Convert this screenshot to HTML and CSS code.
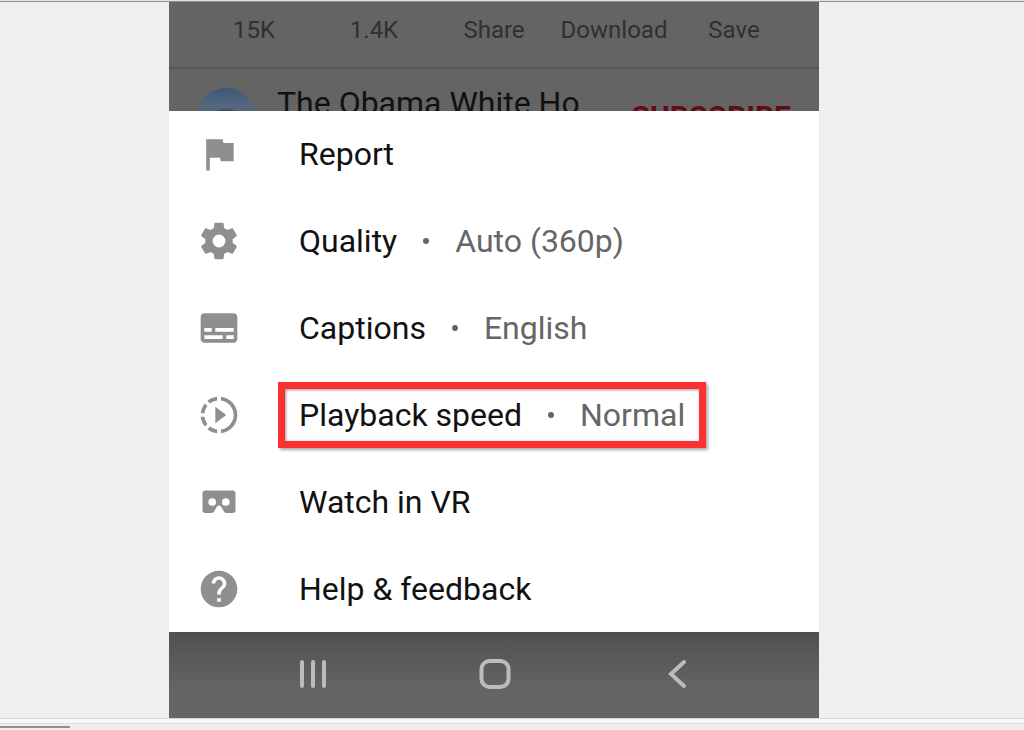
FILE: index.html
```html
<!DOCTYPE html>
<html lang="en">
<head>
    <meta charset="UTF-8">
    <meta name="viewport" content="width=device-width, initial-scale=1.0">
    <title>Playback options</title>
    <link rel="stylesheet" href="styles.css">
</head>
<body>
    <main class="stage">
        <div class="phone">
            <div class="actions">
                <button type="button">15K</button>
                <button type="button">1.4K</button>
                <button type="button">Share</button>
                <button type="button">Download</button>
                <button type="button">Save</button>
            </div>

            <div class="channel">
                <svg class="avatar" viewBox="0 0 58 58" aria-hidden="true">
                    <defs>
                        <linearGradient id="sky" x1="0" y1="0" x2="0" y2="1">
                            <stop offset="0" stop-color="#3d5678"/>
                            <stop offset="0.3" stop-color="#536880"/>
                            <stop offset="0.5" stop-color="#5c6468"/>
                        </linearGradient>
                    </defs>
                    <circle cx="29" cy="29" r="29" fill="url(#sky)"/>
                    <path d="M19 23q10-5 20 0z" fill="#47505a"/>
                    <path d="M14 7l4 4" stroke="#4f6888" stroke-width="2"/>
                </svg>
                <span class="channel-name">The Obama White Ho</span>
                <button type="button" class="subscribe">SUBSCRIBE</button>
            </div>

            <div class="sheet">
                <button type="button" class="option">
                    <svg class="icon" viewBox="0 0 24 24"><path d="M14.4 6L14 4H5v17h2v-7h5.600l.4 2h7V6z"/></svg>
                    <span class="label"><span>Report</span></span>
                </button>
                <button type="button" class="option">
                    <svg class="icon" viewBox="0 0 24 24"><path d="M19.430 12.980c.04-.32.07-.64.07-.98s-.03-.66-.07-.98l2.110-1.650c.19-.15.24-.42.12-.64l-2-3.460c-.12-.22-.39-.3-.61-.22l-2.490 1c-.52-.4-1.080-.73-1.690-.98l-.38-2.650C14.460 2.180 14.250 2 14 2h-4c-.25 0-.46.18-.49.42l-.38 2.650c-.61.25-1.170.59-1.690.98l-2.490-1c-.23-.09-.49 0-.61.22l-2 3.460c-.13.22-.07.49.12.64l2.110 1.650c-.04.32-.07.65-.07.98s.03.66.07.98l-2.110 1.650c-.19.15-.24.42-.12.64l2 3.460c.12.22.39.3.61.22l2.490-1c.52.4 1.080.73 1.690.98l.38 2.650c.03.24.24.42.49.42h4c.25 0 .46-.18.49-.42l.38-2.650c.61-.25 1.170-.59 1.690-.98l2.490 1c.23.09.49 0 .61-.22l2-3.460c.12-.22.07-.49-.12-.64zM12 15.500a3.500 3.500 0 1 1 0-7 3.500 3.500 0 0 1 0 7z"/></svg>
                    <span class="label"><span>Quality</span><span class="dot"></span><span class="value">Auto (360p)</span></span>
                </button>
                <button type="button" class="option">
                    <svg class="icon" viewBox="0 0 24 24"><path d="M20 4H4c-1.100 0-2 .9-2 2v12c0 1.100.9 2 2 2h16c1.100 0 2-.9 2-2V6c0-1.100-.9-2-2-2zM4 12h4v2H4v-2zm10 6H4v-2h10v2zm6 0h-4v-2h4v2zm0-4H10v-2h10v2z"/></svg>
                    <span class="label"><span>Captions</span><span class="dot"></span><span class="value">English</span></span>
                </button>
                <button type="button" class="option">
                    <svg class="icon" viewBox="0 0 24 24"><path d="M13.050 9.790L10 7.500v9l3.050-2.290L16 12zM11 4.070V2.050c-2.010.2-3.840 1-5.320 2.210L7.100 5.690c1.110-.86 2.440-1.440 3.900-1.620zM5.690 7.100L4.260 5.680C3.050 7.160 2.250 8.990 2.050 11h2.020c.18-1.460.76-2.790 1.620-3.900zM4.070 13H2.050c.2 2.010 1 3.840 2.210 5.320l1.430-1.430c-.86-1.100-1.440-2.430-1.620-3.890zm1.610 6.740C7.160 20.950 9 21.750 11 21.950v-2.020c-1.460-.18-2.790-.76-3.900-1.620l-1.420 1.430zM22 12c0 5.160-3.920 9.420-8.950 9.950v-2.020C16.970 19.410 20 16.050 20 12s-3.030-7.410-6.950-7.930V2.050C18.080 2.580 22 6.840 22 12z"/></svg>
                    <span class="label marked"><span>Playback speed</span><span class="dot"></span><span class="value">Normal</span></span>
                </button>
                <button type="button" class="option">
                    <svg class="icon" viewBox="0 0 24 24"><path fill-rule="evenodd" d="M4.500 5.700H19.500q1.500 0 1.500 1.500V16.500q0 1.500-1.500 1.500H16q-.9 0-1.300-.8l-1.600-2.700q-1.100-1.200-2.200 0l-1.600 2.700q-.4.8-1.300.8H4.500Q3 18 3 16.500V7.200Q3 5.700 4.500 5.700zM8.300 9.900a2.100 2.100 0 1 0 0 4.200 2.100 2.100 0 0 0 0-4.200zm7.400 0a2.100 2.100 0 1 0 0 4.200 2.100 2.100 0 0 0 0-4.200z"/></svg>
                    <span class="label"><span>Watch in VR</span></span>
                </button>
                <button type="button" class="option">
                    <svg class="icon" viewBox="0 0 24 24"><path d="M12 2C6.480 2 2 6.480 2 12s4.480 10 10 10 10-4.480 10-10S17.520 2 12 2zm1 17h-2v-2h2v2zm2.070-7.750l-.9.920C13.450 12.900 13 13.500 13 15h-2v-.5c0-1.100.45-2.100 1.170-2.830l1.240-1.260c.37-.36.59-.86.59-1.410 0-1.100-.9-2-2-2s-2 .9-2 2H8c0-2.210 1.790-4 4-4s4 1.790 4 4c0 .88-.36 1.680-.93 2.250z"/></svg>
                    <span class="label"><span>Help &amp; feedback</span></span>
                </button>
            </div>

            <nav class="system-nav">
                <button type="button" aria-label="Recent apps">
                    <svg viewBox="0 0 32 32"><path d="M5 4v24M16 4v24M27 4v24"/></svg>
                </button>
                <button type="button" aria-label="Home">
                    <svg viewBox="0 0 32 32"><rect x="2.500" y="3" width="27" height="26" rx="8"/></svg>
                </button>
                <button type="button" aria-label="Back">
                    <svg viewBox="0 0 32 32"><path d="M23 4L10 16 23 28"/></svg>
                </button>
            </nav>
        </div>
    </main>
    <footer class="strip">
        <div class="progress"></div>
    </footer>
</body>
</html>
```
FILE: styles.css
```css
* {
    box-sizing: border-box;
    margin: 0;
    padding: 0;
}

body {
    background: #efefef;
    color: #111;
    font-family: Roboto, sans-serif;
    overflow: hidden;
}

button {
    background: none;
    border: none;
    color: inherit;
    font: inherit;
    cursor: pointer;
}

.stage {
    padding: 0 205px 0 169px;
    border-top: 1px solid #dfe3df;
    box-shadow: inset 0 1px #8e928e;
}

.phone {
    background: #646464;
    padding-top: 1px;
    background-clip: content-box;
}

.actions {
    display: grid;
    grid-template-columns: repeat(5, 1fr);
    height: 67px;
    padding: 0 25px 10px;
    border-bottom: 2px solid #565656;
    color: #303030;
    font-size: 24px;
}

.channel {
    display: flex;
    align-items: flex-start;
    height: 42px;
    padding: 0 28px;
    overflow: hidden;
}

.avatar {
    flex: none;
    width: 58px;
    height: 58px;
    margin: 19px 22px 0 0;
}

.channel-name {
    margin-top: 14px;
    font-size: 32px;
    line-height: 40px;
    white-space: nowrap;
}

.subscribe {
    margin-top: 28px;
    margin-left: auto;
    color: #650b14;
    font-size: 30px;
    font-weight: 700;
    line-height: 40px;
}

/* options sheet */
.sheet {
    display: grid;
    grid-auto-rows: 86px;
    gap: 1px;
    background: #fff;
}

.option {
    display: flex;
    align-items: center;
    padding-left: 28px;
    text-align: left;
}

.icon {
    flex: none;
    width: 44px;
    height: 44px;
    margin-right: 37px;
    fill: #8f8f8f;
}

.label {
    display: flex;
    align-items: center;
    padding: 3px 14px;
    border: 7px solid transparent;
    font-size: 32px;
    line-height: 46px;
    white-space: nowrap;
}

.marked {
    border-color: #fb3232;
    box-shadow: 2px 2px 3px rgba(0, 0, 0, 0.35), inset 1px 1px 3px rgba(0, 0, 0, 0.4);
}

.dot {
    width: 6px;
    height: 6px;
    margin: 0 26px;
    border-radius: 50%;
    background: #666;
}

.value {
    color: #666;
}

/* system buttons */
.system-nav {
    display: grid;
    grid-template-columns: repeat(3, 182px);
    justify-content: center;
    height: 86px;
    padding: 0 0 2px 2px;
    background: linear-gradient(#505050, #646464 65%);
}

.system-nav svg {
    display: block;
    width: 32px;
    height: 32px;
    margin: 0 auto;
    fill: none;
    stroke: #bcbcbc;
    stroke-width: 4;
    stroke-linecap: round;
}

.strip {
    height: 12px;
    border-top: 1px solid #d8d8d8;
    background: linear-gradient(#f8f8f8 4px, #dedede 4px, #dedede 5px, #efefef 5px);
    padding-top: 7px;
}

.progress {
    width: 70px;
    height: 2px;
    background: #8f8f8f;
}
```
